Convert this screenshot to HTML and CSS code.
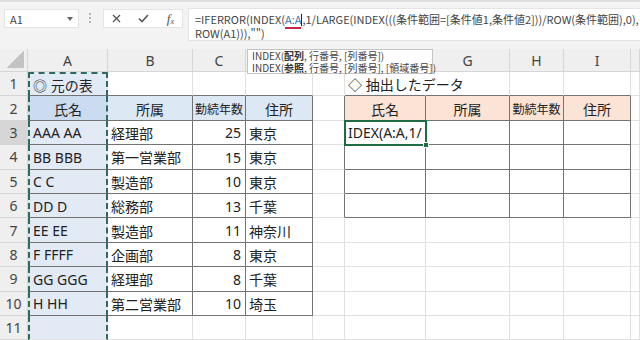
FILE: index.html
```html
<!DOCTYPE html>
<html lang="ja">
<head>
    <meta charset="UTF-8">
    <title>元の表 / 抽出したデータ</title>
    <link rel="stylesheet" href="styles.css">
</head>
<body>

<!-- Formula bar -->
<div class="formula-bar">
    <div class="name-box"><span>A1</span><span class="arrow"></span></div>
    <div class="grip"></div>
    <div class="fx-buttons">
        <svg width="9" height="9" viewBox="0 0 9 9"><path d="M1 1L8 8M8 1L1 8" stroke="#555" stroke-width="1.3" fill="none"/></svg>
        <svg width="11" height="9" viewBox="0 0 11 9"><path d="M1 4.5L4 7.5L10 1" stroke="#555" stroke-width="1.6" fill="none"/></svg>
        <span class="fx"><i>f</i><sub>x</sub></span>
    </div>
    <div class="formula">
        <div>=IFERROR(INDEX(<span class="ref">A:A</span><span class="caret"></span>,1/LARGE(INDEX(((条件範囲=[条件値1,条件値2]))/ROW(条件範囲),0),</div>
        <div>ROW(A1))),"")</div>
    </div>
</div>

<!-- Sheet grid, filled in by the script below -->
<div class="sheet" id="sheet"></div>

<!-- Function hint -->
<div class="hint">
    <div>INDEX(<b>配列</b>, 行番号, [列番号])</div>
    <div>INDEX(<b>参照</b>, 行番号, [列番号], [領域番号])</div>
</div>

<script>
    document.addEventListener('DOMContentLoaded', function () {
        // Column letters; D, E and F sit under the function hint, J runs off the edge
        const letters = ['A', 'B', 'C', '', '', '', 'G', 'H', 'I', ''];
        // Sheet content, one array per row (columns A..J)
        const rows = [
            ['◎ 元の表', '', '', '', '', '◇ 抽出したデータ'],
            ['氏名', '所属', '勤続年数', '住所', '', '氏名', '所属', '勤続年数', '住所'],
            ['AAA AA', '経理部', '25', '東京', '', 'IDEX(A:A,1/'],
            ['BB BBB', '第一営業部', '15', '東京'],
            ['C C', '製造部', '10', '東京'],
            ['DD D', '総務部', '13', '千葉'],
            ['EE EE', '製造部', '11', '神奈川'],
            ['F FFFF', '企画部', '8', '東京'],
            ['GG GGG', '経理部', '8', '千葉'],
            ['H HH', '第二営業部', '10', '埼玉'],
            []
        ];
        const activeRow = 3, activeCol = 6;

        // r, c are 1-based (row 1.., column A = 1)
        const inTable = (r, c) =>
            (r >= 2 && r <= 10 && c >= 1 && c <= 4) ||
            (r >= 2 && r <= 6 && c >= 6 && c <= 9);

        const sheet = document.getElementById('sheet');
        const add = (cls, text) => {
            const el = document.createElement('div');
            el.className = cls;
            el.textContent = text || '';
            sheet.appendChild(el);
            return el;
        };

        // Column header row
        add('hdr corner');
        letters.forEach((l, i) => {
            add('hdr col-hdr' + (i + 1 === activeCol ? ' hdr-active' : ''), l);
        });

        // Body rows
        rows.forEach((row, ri) => {
            const r = ri + 1;
            add('hdr row-hdr' + (r === activeRow ? ' hdr-active' : ''), r);
            for (let c = 1; c <= letters.length; c++) {
                const text = row[c - 1] || '';
                const cls = ['cell'];
                if (inTable(r, c) || inTable(r, c + 1)) cls.push('edge-r');
                if (inTable(r, c) || inTable(r + 1, c)) cls.push('edge-b');
                if (c === 1) cls.push('col-a');
                if (c === 1 && r === 1) cls.push('copy-top');
                if (r === 2 && c <= 4) cls.push('th', c === 1 ? 'th-blue-sel' : 'th-blue');
                if (r === 2 && c >= 6 && c <= 9) cls.push('th', 'th-peach');
                if (c === 3 && r >= 3 && r <= 10) cls.push('num');
                if (text === '勤続年数') cls.push('shrink');
                if (r === 1 && c === 6) cls.push('spill');
                if (r === activeRow && c === activeCol) cls.push('active');
                add(cls.join(' '), text);
            }
        });
    });
</script>

</body>
</html>
```

FILE: styles.css
```css
/* Page frame */
body {
    margin: 0;
    width: 640px;
    height: 340px;
    overflow: hidden;
    position: relative;
    background: #fff;
    font-family: "Noto Sans", "Noto Sans CJK JP", sans-serif;
    color: #222;
}

/* Formula bar */
.formula-bar {
    box-sizing: border-box;
    height: 49px;
    background: #f3f3f3;
    border-top: 2px solid #dedede;
    display: flex;
    align-items: flex-start;
    padding-top: 7px;
}
.name-box {
    box-sizing: border-box;
    margin-left: 4px;
    width: 75px;
    height: 19px;
    background: #fff;
    border: 1px solid #e4e4e4;
    display: flex;
    align-items: center;
    justify-content: space-between;
    padding: 0 5px 0 5px;
    font-family: "Noto Sans CJK JP", sans-serif;
    font-size: 11px;
    color: #444;
}
.name-box .arrow {
    border-left: 3px solid transparent;
    border-right: 3px solid transparent;
    border-top: 4px solid #666;
}
.grip {
    width: 2px;
    height: 10px;
    margin: 4px 0 0 10px;
    border-left: 2px dotted #b5b5b5;
}
.fx-buttons {
    box-sizing: border-box;
    margin-left: 10px;
    width: 80px;
    height: 19px;
    background: #fff;
    border: 1px solid #e4e4e4;
    display: flex;
    align-items: center;
    justify-content: space-between;
    padding: 0 8px;
}
.fx {
    font-family: "Liberation Serif", serif;
    font-size: 13px;
    color: #555;
    line-height: 1;
}
.fx sub {
    font-size: 8px;
    font-style: italic;
    vertical-align: -1px;
}
.formula {
    box-sizing: border-box;
    flex: 1;
    min-width: 0;
    margin-left: 5px;
    margin-top: -1px;
    height: 33px;
    background: #fff;
    border: 1px solid #e4e4e4;
    border-right: none;
    padding: 3px 0 0 6px;
    font-family: "Noto Sans CJK JP", sans-serif;
    font-size: 11px;
    line-height: 14px;
    color: #444;
    white-space: nowrap;
    overflow: hidden;
}
.formula .ref {
    color: #3c6fb4;
    border-bottom: 2px solid #c9254a;
}
.formula .caret {
    display: inline-block;
    width: 1px;
    height: 12px;
    background: #222;
    vertical-align: -2px;
}

/* Sheet grid */
.sheet {
    display: grid;
    grid-template-columns: 28px 80px 85px 53px 67px 32px 81px 84px 54px 67px 9px;
    grid-template-rows: 23px repeat(11, 24.4px);
    font-size: 14px;
}
.hdr {
    box-sizing: border-box;
    background: #efefef;
    border-right: 1px solid #d6d6d6;
    border-bottom: 1px solid #d6d6d6;
    color: #444;
    display: flex;
    align-items: center;
    justify-content: center;
    font-size: 14px;
}
.corner {
    background: #efefef linear-gradient(to bottom right, transparent 50%, #c3c3c3 50%) no-repeat right 3px bottom 3px / 17px 17px;
}
.hdr-active {
    background: #d6d6d6;
}
.cell {
    box-sizing: border-box;
    border-right: 1px solid #e1e1e1;
    border-bottom: 1px solid #e1e1e1;
    padding: 1px 3px 0 3px;
    display: flex;
    align-items: center;
    white-space: nowrap;
    overflow: hidden;
}
.cell.edge-r {
    border-right-color: #737373;
}
.cell.edge-b {
    border-bottom-color: #737373;
}
/* Column A: filled and wrapped by the copy marquee */
.cell.col-a {
    background: #e2eaf6;
    border-left: 2px dashed #2f6a5a;
    border-right: 2px dashed #2f6a5a;
}
.cell.copy-top {
    border-top: 2px dashed #2f6a5a;
}
.cell.th {
    justify-content: center;
}
.cell.th-blue {
    background: #dde8f5;
}
.cell.th-blue-sel {
    background: #cbdbf0;
}
.cell.th-peach {
    background: #fbe4d6;
}
.cell.num {
    justify-content: flex-end;
    padding-right: 4px;
}
.cell.shrink {
    font-size: 12px;
    padding: 1px 1px 0;
}
.cell.spill {
    overflow: visible;
    border-right-color: transparent;
}
.cell.active {
    position: relative;
    overflow: visible;
    outline: 2px solid #1f6b43;
    outline-offset: -1px;
}
.cell.active::after {
    content: "";
    position: absolute;
    right: -4px;
    bottom: -4px;
    width: 4px;
    height: 4px;
    background: #1f6b43;
    border: 1px solid #fff;
}

/* Function argument hint */
.hint {
    position: absolute;
    left: 247px;
    top: 49px;
    width: 186px;
    height: 25px;
    box-sizing: border-box;
    background: #fff;
    border: 1px solid #c4c4c4;
    padding: 0 0 0 4px;
    font-family: "Noto Sans CJK JP", sans-serif;
    font-size: 10px;
    line-height: 12px;
    color: #444;
    white-space: nowrap;
}
.hint b {
    font-weight: 700;
    color: #333;
}
```
